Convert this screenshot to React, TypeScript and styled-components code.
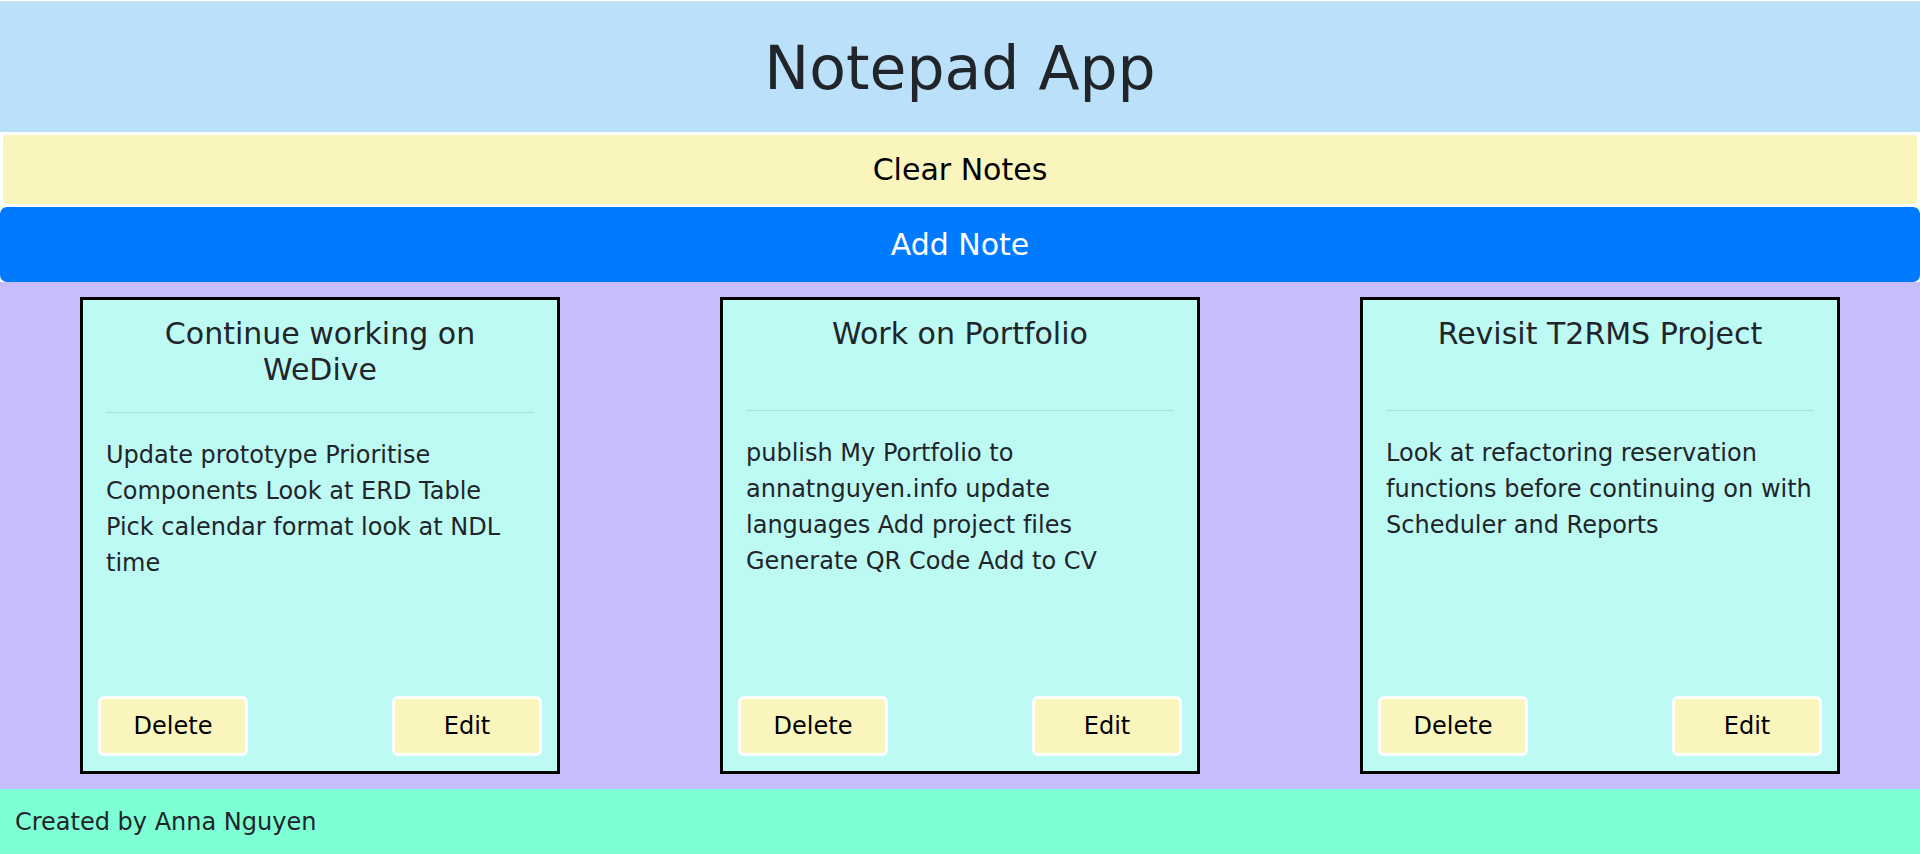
import React from "react";
import styled, { createGlobalStyle } from "styled-components";

const GlobalStyle = createGlobalStyle`
  *, *::before, *::after { box-sizing: border-box; }
  body {
    margin: 0;
    background: #fff;
    color: #212529;
    font-family: Verdana, "DejaVu Sans", sans-serif;
    font-size: 24px;
    line-height: 36px;
    font-variant-ligatures: none;
  }
`;

const Page = styled.div`
  display: flex;
  flex-direction: column;
  min-height: 100vh;
  padding-top: 1px;
`;

const Header = styled.header`
  padding: 30px 16px 28px;
  border-top: 1px solid #c8dfee;
  background: #bbe0fa;
  text-align: center;
`;

const Title = styled.h1`
  margin: 0;
  font-size: 60px;
  font-weight: 400;
  line-height: 72px;
`;

const Button = styled.button`
  padding: 0;
  border: 3px solid #fff;
  border-radius: 6px;
  background: #faf4bd;
  color: #000;
  font: inherit;
  cursor: pointer;
`;

const WideButton = styled(Button)<{ $primary?: boolean }>`
  display: block;
  width: 100%;
  height: 75px;
  font-size: 30px;
  border-radius: 7px;
  ${({ $primary }) =>
    $primary && "background: #007bff; border-color: #007bff; color: #fff;"}
`;

const SmallButton = styled(Button)`
  width: 150px;
  height: 60px;
`;

const Board = styled.main`
  display: grid;
  grid-template-columns: repeat(3, 1fr);
  justify-items: center;
  padding: 15px 0;
  background: #c7bdfa;
`;

const Card = styled.article`
  display: flex;
  flex-direction: column;
  width: 75%;
  min-height: 477px;
  padding: 15px;
  border: 3px solid #000;
  background: #bdfaf4;
`;

const CardContent = styled.div`
  flex: 1;
  padding: 0 8px;
`;

const CardTitle = styled.h2`
  min-height: 71px;
  margin: 0;
  padding-top: 1px;
  font-size: 30px;
  font-weight: 400;
  line-height: 36px;
  text-align: center;
`;

const Divider = styled.hr`
  margin: 24px 0;
  border: 0;
  border-top: 1px solid rgba(0, 0, 0, 0.1);
`;

const CardText = styled.p`
  margin: 0;
`;

const Actions = styled.div`
  display: flex;
  justify-content: space-between;
`;

const Footer = styled.footer`
  flex: 1;
  padding: 15px 15px 14px;
  background: #7fffd4;
`;

const notes = [
  {
    title: "Continue working on WeDive",
    text: "Update prototype Prioritise Components Look at ERD Table Pick calendar format look at NDL time",
  },
  {
    title: "Work on Portfolio",
    text: "publish My Portfolio to annatnguyen.info update languages Add project files Generate QR Code Add to CV",
  },
  {
    title: "Revisit T2RMS Project",
    text: "Look at refactoring reservation functions before continuing on with Scheduler and Reports",
  },
];

export default function App() {
  return (
    <Page>
      <GlobalStyle />
      <Header>
        <Title>Notepad App</Title>
      </Header>
      <WideButton type="button">Clear Notes</WideButton>
      <WideButton type="button" $primary>
        Add Note
      </WideButton>
      <Board>
        {notes.map((note) => (
          <Card key={note.title}>
            <CardContent>
              <CardTitle>{note.title}</CardTitle>
              <Divider />
              <CardText>{note.text}</CardText>
            </CardContent>
            <Actions>
              <SmallButton type="button">Delete</SmallButton>
              <SmallButton type="button">Edit</SmallButton>
            </Actions>
          </Card>
        ))}
      </Board>
      <Footer>Created by Anna Nguyen</Footer>
    </Page>
  );
}
